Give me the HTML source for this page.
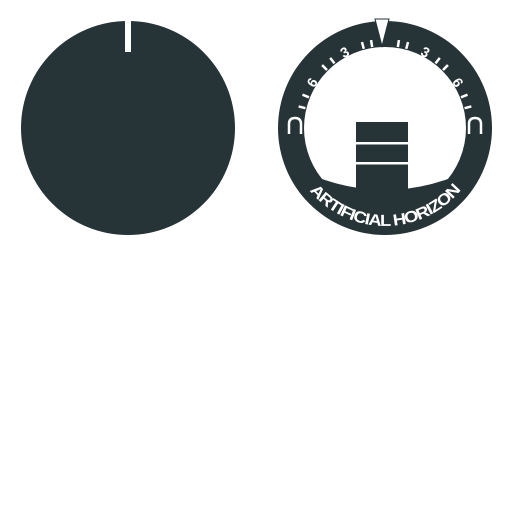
<!DOCTYPE html>
<html><head><style>html,body{margin:0;padding:0;background:#fff;width:512px;height:512px;overflow:hidden}</style></head>
<body>
<svg width="512" height="512" viewBox="0 0 512 512" xmlns="http://www.w3.org/2000/svg">
<circle cx="128" cy="128" r="107" fill="#263337"/>
<rect x="125" y="19" width="6" height="33" fill="#fff"/>

<circle cx="385" cy="128" r="107" fill="#263337"/>
<defs><clipPath id="c"><path d="M290 165 Q385 215 480 165 L480 30 L290 30 Z"/></clipPath></defs>
<circle cx="385" cy="128" r="81" fill="#fff" clip-path="url(#c)"/>
<rect x="356" y="122" width="52" height="77" fill="#263337"/>
<rect x="356" y="142" width="52" height="2.5" fill="#fff"/>
<rect x="356" y="162" width="52" height="2.5" fill="#fff"/>
<polygon points="375,19 389,19 382,46" fill="#fff" stroke="#263337" stroke-width="1"/>
<g stroke="#fff" stroke-width="2.5">
<g transform="rotate(-9 385 128)"><line x1="385" y1="39" x2="385" y2="46"/></g>
<g transform="rotate(-15 385 128)"><line x1="385" y1="39" x2="385" y2="46"/></g>
<g transform="rotate(9 385 128)"><line x1="385" y1="39" x2="385" y2="46"/></g>
<g transform="rotate(15 385 128)"><line x1="385" y1="39" x2="385" y2="46"/></g>
<g transform="rotate(-38 385 128)"><line x1="385" y1="39" x2="385" y2="46"/></g>
<g transform="rotate(-45 385 128)"><line x1="385" y1="39" x2="385" y2="46"/></g>
<g transform="rotate(38 385 128)"><line x1="385" y1="39" x2="385" y2="46"/></g>
<g transform="rotate(45 385 128)"><line x1="385" y1="39" x2="385" y2="46"/></g>
<g transform="rotate(-68 385 128)"><line x1="385" y1="39" x2="385" y2="46"/></g>
<g transform="rotate(-76 385 128)"><line x1="385" y1="39" x2="385" y2="46"/></g>
<g transform="rotate(68 385 128)"><line x1="385" y1="39" x2="385" y2="46"/></g>
<g transform="rotate(76 385 128)"><line x1="385" y1="39" x2="385" y2="46"/></g>
</g>
<g fill="#fff" font-family="Liberation Sans, sans-serif" font-weight="bold" font-size="14" text-anchor="middle">
<text transform="rotate(-28 385 128)" x="385" y="47">3</text>
<text transform="rotate(28 385 128)" x="385" y="47">3</text>
<text transform="rotate(-58 385 128)" x="385" y="47">6</text>
<text transform="rotate(58 385 128)" x="385" y="47">6</text>
</g>
<g fill="none" stroke="#fff" stroke-width="2.5">
<path d="M289 134 L289 124 Q289 118 295 118 Q301 118 301 124 L301 134"/>
<path d="M469 134 L469 124 Q469 118 475 118 Q481 118 481 124 L481 134"/>
</g>
<path id="tp" d="M287 128 A98 98 0 0 0 483 128" fill="none"/>
<text fill="#fff" font-family="Liberation Sans, sans-serif" font-size="16" font-weight="bold" letter-spacing="-1"><textPath href="#tp" startOffset="50%" text-anchor="middle" textLength="172" lengthAdjust="spacingAndGlyphs">ARTIFICIAL HORIZON</textPath></text>
</svg>
</body></html>
